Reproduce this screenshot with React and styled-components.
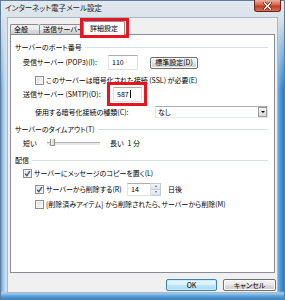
import React from 'react'
import styled, { createGlobalStyle } from 'styled-components'

const GlobalStyle = createGlobalStyle`
  html, body {
    margin: 0;
    padding: 0;
  }
  body {
    width: 285px;
    height: 300px;
    overflow: hidden;
    font-family: "Noto Sans CJK JP", "Noto Sans", sans-serif;
    font-feature-settings: "palt";
    font-size: 7px;
    color: #000;
  }
`

const Window = styled.div`
  position: relative;
  width: 285px;
  height: 300px;
  box-sizing: border-box;
  display: flex;
  flex-direction: column;
  background:
    linear-gradient(to bottom, #e3e9ef 0, #dae2ea 18px, rgba(218, 226, 234, 0) 90px),
    linear-gradient(to top, #2f7cc4 0, #5aa3de 4px, #a9cdea 7px, rgba(169, 205, 234, 0) 9px),
    linear-gradient(to right, #3d8ad0 0, #7fb8e6 2px, #c6dbec 5px, #d9e3ec 8px, #d9e3ec calc(100% - 9px), #6aaee2 calc(100% - 7px), #3a88cf calc(100% - 3px), #2f6fb0 100%);
  box-shadow: inset 0 0 0 1px #5d7d9c;
`

const TitleBar = styled.div`
  height: 18px;
  display: flex;
  align-items: flex-start;
  padding: 0 4px 0 5px;
`

const Title = styled.div`
  font-size: 7.5px;
  line-height: 9px;
  padding-top: 3px;
  color: #1b1b1b;
`

const CloseButton = styled.div`
  margin-left: auto;
  width: 27px;
  height: 12px;
  box-sizing: border-box;
  border: 1px solid #6b2417;
  border-top: none;
  border-radius: 0 0 3px 3px;
  background: linear-gradient(to bottom, #eab0a3 0, #d9634c 45%, #c23a22 55%, #d66e55 100%);
  display: flex;
  align-items: center;
  justify-content: center;
`

const Client = styled.div`
  flex: 1;
  margin: 0 8px 8px 8px;
  background: #f0f0f0;
  display: flex;
  flex-direction: column;
  padding: 3px 2px 1px 2px;
  box-shadow: 0 0 0 1px #a9b8c6;
`

const Tabs = styled.div`
  height: 13px;
  display: flex;
  align-items: flex-end;
`

const Tab = styled.div`
  position: relative;
  box-sizing: border-box;
  width: ${p => p.w}px;
  height: ${p => (p.active ? 14 : 10)}px;
  margin-left: ${p => (p.active ? 2 : 0)}px;
  margin-bottom: ${p => (p.active ? -1 : 0)}px;
  z-index: ${p => (p.active ? 1 : 0)};
  border: 1px solid #898c95;
  border-bottom: none;
  border-right: ${p => (p.last || p.active ? '1px solid #898c95' : 'none')};
  border-radius: 2px 2px 0 0;
  background: ${p =>
    p.active ? '#fff' : 'linear-gradient(to bottom, #f3f3f3 0, #ebebeb 50%, #dddddd 51%, #cfcfcf 100%)'};
  display: flex;
  align-items: center;
  justify-content: ${p => (p.active ? 'center' : 'flex-start')};
  padding-left: ${p => (p.active ? 0 : 3)}px;
  white-space: nowrap;
  line-height: 9px;
`

const Panel = styled.div`
  height: 239px;
  box-sizing: border-box;
  background: #fff;
  border: 1px solid #898c95;
  padding: 6px 6px 0 4px;
  display: flex;
  flex-direction: column;
`

const GroupHeader = styled.div`
  height: 12px;
  margin-top: ${p => p.mt || 0}px;
  display: flex;
  align-items: center;
  white-space: nowrap;
  line-height: 9px;
  &::after {
    content: '';
    flex: 1;
    height: 1px;
    margin-left: 3px;
    background: #d5dfe5;
  }
`

const Row = styled.div`
  height: ${p => p.h}px;
  margin-top: ${p => p.mt || 0}px;
  padding-left: ${p => p.indent}px;
  display: flex;
  align-items: center;
  white-space: nowrap;
  line-height: 9px;
`

const Label = styled.span`
  width: ${p => (p.w ? `${p.w}px` : 'auto')};
  margin-left: ${p => p.ml || 0}px;
  flex-shrink: 0;
`

const TextBox = styled.div`
  position: relative;
  box-sizing: border-box;
  width: ${p => p.w}px;
  height: ${p => p.h}px;
  background: #fff;
  border: 1px solid #dbdfe6;
  border-top-color: #abadb3;
  border-left-color: #e2e3ea;
  padding-left: 3px;
  display: flex;
  align-items: center;
`

const Caret = styled.span`
  width: 1px;
  height: 8px;
  background: #000;
  margin-left: 1px;
`

const Button = styled.div`
  box-sizing: border-box;
  width: ${p => p.w}px;
  height: 12px;
  margin-left: ${p => p.ml || 0}px;
  border: 1px solid ${p => (p.primary ? '#3c7fb1' : '#707070')};
  border-radius: 2px;
  background: ${p =>
    p.primary
      ? 'linear-gradient(to bottom, #eaf6fd 0, #d9f0fc 50%, #bee6fd 51%, #a7d9f5 100%)'
      : 'linear-gradient(to bottom, #f2f2f2 0, #ebebeb 50%, #dddddd 51%, #cfcfcf 100%)'};
  box-shadow: inset 0 0 0 1px ${p => (p.primary ? '#c6ecfd' : '#fcfcfc')};
  display: flex;
  align-items: center;
  justify-content: center;
  line-height: 9px;
  white-space: nowrap;
`

const Select = styled.div`
  box-sizing: border-box;
  width: ${p => p.w}px;
  height: 12px;
  background: #fff;
  border: 1px solid #abadb3;
  border-color: #abadb3 #dbdfe6 #e3e9ef #e2e3ea;
  display: flex;
  align-items: center;
  padding-left: 2px;
`

const DropButton = styled.div`
  margin-left: auto;
  width: 9px;
  height: 10px;
  box-sizing: border-box;
  border: 1px solid #9c9c9c;
  background: linear-gradient(to bottom, #f2f2f2, #d8d8d8);
  display: flex;
  align-items: center;
  justify-content: center;
  &::after {
    content: '';
    border-left: 2px solid transparent;
    border-right: 2px solid transparent;
    border-top: 2px solid #000;
  }
`

const Spin = styled.div`
  box-sizing: border-box;
  width: 10px;
  height: 13px;
  border: 1px solid #c5cad3;
  border-left: none;
  display: flex;
  flex-direction: column;
`

const SpinPart = styled.div`
  flex: 1;
  background: linear-gradient(to bottom, #f4f6f9, #dde3ea);
  border-bottom: ${p => (p.top ? '1px solid #c5cad3' : 'none')};
  display: flex;
  align-items: center;
  justify-content: center;
  &::after {
    content: '';
    border-left: 1.5px solid transparent;
    border-right: 1.5px solid transparent;
    ${p => (p.top ? 'border-bottom: 2px solid #4d6185;' : 'border-top: 2px solid #4d6185;')}
  }
`

const Track = styled.div`
  position: relative;
  width: 53px;
  height: 2px;
  border-top: 1px solid #b0b0b0;
  background: #e7eaea;
  flex-shrink: 0;
`

const Thumb = styled.div`
  position: absolute;
  left: 3px;
  top: -4px;
  width: 3px;
  height: 6px;
  border: 1px solid #8e8f8f;
  border-top: none;
  border-radius: 0 0 1px 1px;
  background: linear-gradient(to right, #f4f4f4, #d6d6d6);
`

const Box = styled.span`
  box-sizing: border-box;
  width: 9px;
  height: 9px;
  border: 1px solid #8e8f8f;
  background: linear-gradient(135deg, #dcdcdc 0, #fbfbfb 100%);
  box-shadow: inset 0 0 0 1px #f4f4f4;
  margin-right: 2px;
  flex-shrink: 0;
  display: flex;
  align-items: center;
  justify-content: center;
`

const ButtonBar = styled.div`
  margin-top: 6px;
  margin-right: -1px;
  display: flex;
  justify-content: flex-end;
  gap: 6px;
`

const Highlight = styled.div`
  position: absolute;
  left: ${p => p.x}px;
  top: ${p => p.y}px;
  width: ${p => p.w}px;
  height: ${p => p.h}px;
  box-sizing: border-box;
  border: 3px solid #e5161d;
  pointer-events: none;
  z-index: 5;
`

const Check = ({ checked }) => (
  <Box>
    {checked && (
      <svg width="7" height="7" viewBox="0 0 7 7">
        <path d="M1 3.6 L2.8 5.6 L6 1.2" fill="none" stroke="#3d4f7a" strokeWidth="1.3" />
      </svg>
    )}
  </Box>
)

const App = () => (
  <>
    <GlobalStyle />
    <Window>
      <TitleBar>
        <Title>インターネット電子メール設定</Title>
        <CloseButton>
          <svg width="9" height="8" viewBox="0 0 9 8">
            <path d="M1.5 1 L7.5 7 M7.5 1 L1.5 7" stroke="#4a1a12" strokeWidth="2.6" strokeLinecap="square" />
            <path d="M1.5 1 L7.5 7 M7.5 1 L1.5 7" stroke="#fff" strokeWidth="1.4" strokeLinecap="square" />
          </svg>
        </CloseButton>
      </TitleBar>
      <Client>
        <Tabs>
          <Tab w={29}>全般</Tab>
          <Tab w={42} last>送信サーバー</Tab>
          <Tab w={42} active>詳細設定</Tab>
        </Tabs>
        <Panel>
          <GroupHeader>サーバーのポート番号</GroupHeader>
          <Row h={15} mt={2} indent={8}>
            <Label w={85}>受信サーバー (POP3)(I):</Label>
            <TextBox w={30} h={15}>110</TextBox>
            <Button w={48} ml={12}>標準設定(D)</Button>
          </Row>
          <Row h={12} mt={4} indent={20}>
            <Check />
            <Label>このサーバーは暗号化された接続 (SSL) が必要(E)</Label>
          </Row>
          <Row h={16} indent={8}>
            <Label w={90}>送信サーバー (SMTP)(O):</Label>
            <TextBox w={29} h={15}>
              587
              <Caret />
            </TextBox>
          </Row>
          <Row h={14} mt={3} indent={20}>
            <Label w={120}>使用する暗号化接続の種類(C):</Label>
            <Select w={113}>
              なし
              <DropButton />
            </Select>
          </Row>
          <GroupHeader mt={4}>サーバーのタイムアウト(T)</GroupHeader>
          <Row h={14} mt={1} indent={8}>
            <Label w={24}>短い</Label>
            <Track>
              <Thumb />
            </Track>
            <Label ml={10}>長い</Label>
            <Label ml={4}>1 分</Label>
          </Row>
          <GroupHeader mt={4}>配信</GroupHeader>
          <Row h={12} mt={1} indent={8}>
            <Check checked />
            <Label>サーバーにメッセージのコピーを置く(L)</Label>
          </Row>
          <Row h={14} mt={3} indent={20}>
            <Check checked />
            <Label w={81}>サーバーから削除する(R)</Label>
            <TextBox w={24} h={13}>14</TextBox>
            <Spin>
              <SpinPart top />
              <SpinPart />
            </Spin>
            <Label ml={7}>日後</Label>
          </Row>
          <Row h={12} mt={2} indent={20}>
            <Check />
            <Label>[削除済みアイテム] から削除されたら、サーバーから削除(M)</Label>
          </Row>
        </Panel>
        <ButtonBar>
          <Button w={51} primary>OK</Button>
          <Button w={53}>キャンセル</Button>
        </ButtonBar>
      </Client>
      <Highlight x={80} y={18} w={49} h={20} />
      <Highlight x={107} y={82} w={40} h={24} />
    </Window>
  </>
)

export default App
